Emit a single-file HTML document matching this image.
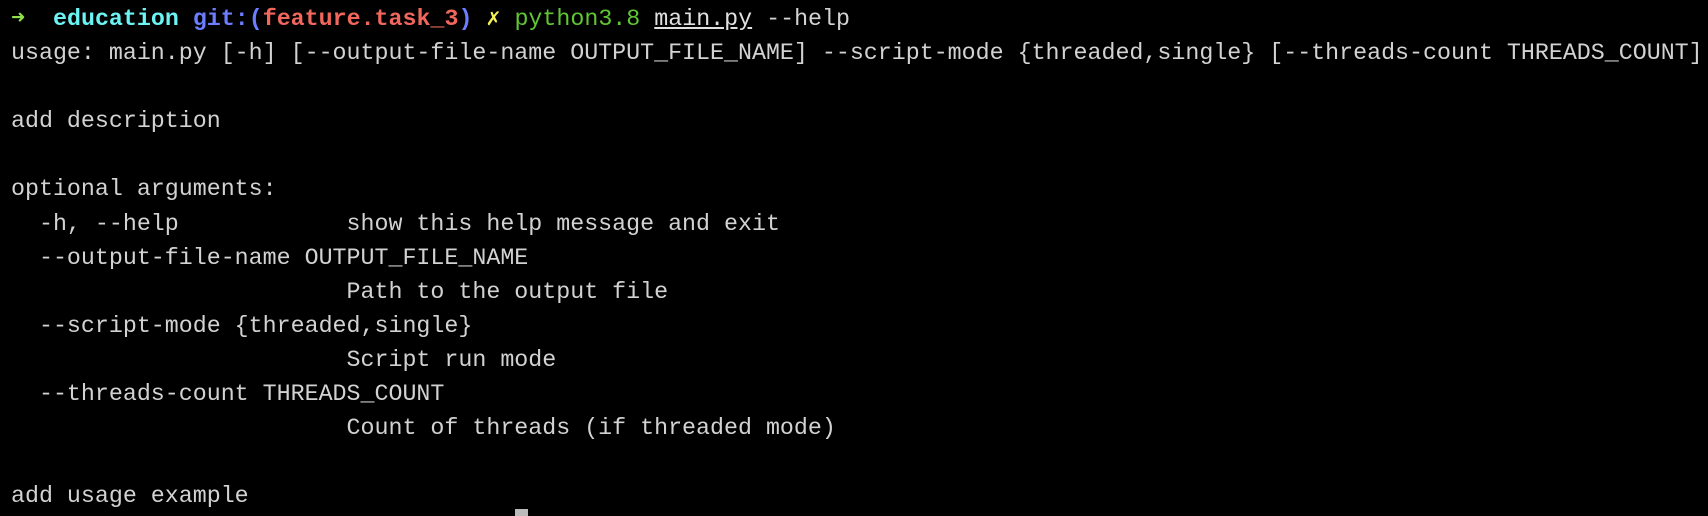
<!DOCTYPE html>
<html><head><meta charset="utf-8"><style>
html,body{margin:0;padding:0;background:#000;width:1708px;height:516px;overflow:hidden}
pre{margin:0;position:absolute;left:11px;top:2px;font-family:"Liberation Mono","DejaVu Sans Mono",monospace;font-size:23.3px;line-height:34.1px;color:#d2d2d2;white-space:pre}
.ar{color:#8fe04a;font-weight:bold}.cy{color:#6cf3f3;font-weight:bold}.bl{color:#6d7dff;font-weight:bold}.rd{color:#f2675d;font-weight:bold}.ye{color:#f5f05a;font-weight:bold}.gr{color:#5fc734}.u{text-decoration:underline;color:#e0e0e0}
.cur{position:absolute;left:515px;top:509px;width:13px;height:7px;background:#bbb}
</style></head><body>
<pre><span class="ar">➜</span>  <span class="cy">education</span> <span class="bl">git:(</span><span class="rd">feature.task_3</span><span class="bl">)</span> <span class="ye">✗</span> <span class="gr">python3.8</span> <span class="u">main.py</span> --help
usage: main.py [-h] [--output-file-name OUTPUT_FILE_NAME] --script-mode {threaded,single} [--threads-count THREADS_COUNT]

add description

optional arguments:
  -h, --help            show this help message and exit
  --output-file-name OUTPUT_FILE_NAME
                        Path to the output file
  --script-mode {threaded,single}
                        Script run mode
  --threads-count THREADS_COUNT
                        Count of threads (if threaded mode)

add usage example</pre>
<div class="cur"></div>
</body></html>
